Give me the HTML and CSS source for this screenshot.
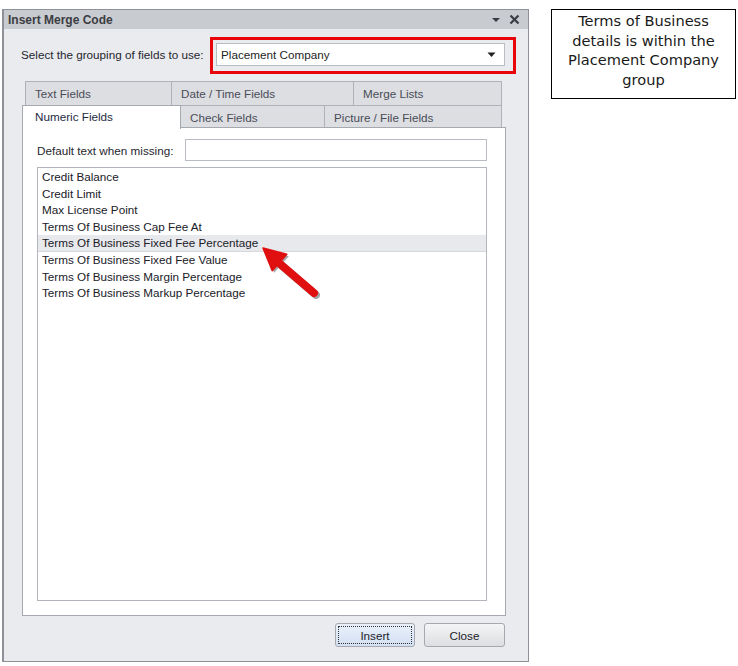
FILE: index.html
```html
<!DOCTYPE html>
<html>
<head>
<meta charset="utf-8">
<link rel="stylesheet" href="styles.css">
</head>
<body>
<div class="page">
  <div class="dialog">
    <div class="titlebar">
      <span class="title">Insert Merge Code</span>
      <span class="tb-icons">
        <svg width="10" height="10" viewBox="0 0 10 10"><path d="M1 3 L9 3 L5 7 Z" fill="#3a3d44"/></svg>
        <svg width="11" height="11" viewBox="0 0 11 11"><path d="M1.5 1.5 L9.5 9.5 M9.5 1.5 L1.5 9.5" stroke="#3a3d44" stroke-width="2.2"/></svg>
      </span>
    </div>
    <div class="body">
      <div class="group-row">
        <span class="group-label">Select the grouping of fields to use:</span>
        <div class="combo">
          <span>Placement Company</span>
          <svg width="9" height="6" viewBox="0 0 9 6"><path d="M0.5 0.5 L8.5 0.5 L4.5 5 Z" fill="#222"/></svg>
        </div>
      </div>
      <div class="tabs">
        <div class="tab-row row1">
          <div class="tab t-text">Text Fields</div>
          <div class="tab t-date">Date / Time Fields</div>
          <div class="tab t-merge">Merge Lists</div>
        </div>
        <div class="tab-row row2">
          <div class="tab t-num active">Numeric Fields</div>
          <div class="tab t-check">Check Fields</div>
          <div class="tab t-pic">Picture / File Fields</div>
        </div>
      </div>
      <div class="panel">
        <div class="default-row">
          <span class="default-label">Default text when missing:</span>
          <div class="text-input"></div>
        </div>
        <div class="listbox">
          <div class="item">Credit Balance</div>
          <div class="item">Credit Limit</div>
          <div class="item">Max License Point</div>
          <div class="item">Terms Of Business Cap Fee At</div>
          <div class="item hl">Terms Of Business Fixed Fee Percentage</div>
          <div class="item">Terms Of Business Fixed Fee Value</div>
          <div class="item">Terms Of Business Margin Percentage</div>
          <div class="item">Terms Of Business Markup Percentage</div>
        </div>
      </div>
      <div class="buttons">
        <div class="btn primary"><span class="focus">Insert</span></div>
        <div class="btn">Close</div>
      </div>
    </div>
    <svg class="arrow" width="80" height="70" viewBox="255 240 80 70">
      <g transform="translate(2,2)" opacity="0.35">
        <line x1="277" y1="263" x2="312" y2="293" stroke="#000" stroke-width="8" stroke-linecap="round"/>
        <polygon points="261,248 270.2,270.8 284.8,254.2" fill="#000"/>
      </g>
      <line x1="277" y1="263" x2="312" y2="293" stroke="#e01010" stroke-width="8" stroke-linecap="round"/>
      <polygon points="261,248 270.2,270.8 284.8,254.2" fill="#e01010" stroke="#e01010" stroke-width="1.5" stroke-linejoin="round"/>
    </svg>
  </div>
  <div class="note">Terms of Business details is within the Placement Company group</div>
</div>
</body>
</html>
```

FILE: styles.css
```css
html, body {
  margin: 0;
  padding: 0;
  background: #ffffff;
}
.page {
  display: flex;
  align-items: flex-start;
  padding: 9px 0 0 2px;
}
.dialog {
  position: relative;
  width: 524px;
  height: 651px;
  border: 1px solid #8e9298;
  border-left-width: 2px;
  background: #e9ebee;
  font-family: "Liberation Sans", Arial, sans-serif;
  font-size: 11.7px;
  color: #1e1e24;
  display: flex;
  flex-direction: column;
}
.titlebar {
  height: 19px;
  background: #c8cbd0;
  display: flex;
  align-items: center;
  justify-content: space-between;
  padding: 0 8px 0 4px;
}
.title {
  font-weight: bold;
  color: #3b3d42;
  font-size: 12px;
}
.tb-icons {
  display: flex;
  align-items: center;
  gap: 8px;
}
.body {
  flex: 1;
  display: flex;
  flex-direction: column;
  padding: 14px 21px 0 18px;
}
.group-row {
  display: flex;
  align-items: center;
  height: 23px;
}
.group-label {
  width: 194px;
  margin-left: -1px;
  padding-right: 1px;
  color: #26262e;
}
.combo {
  position: relative;
  background: #ffffff;
  border: 1px solid #b9bcc2;
  display: flex;
  align-items: center;
  justify-content: space-between;
  padding: 0 8px 0 4px;
  box-sizing: border-box;
  width: 289px;
  height: 23px;
}
.combo::after {
  content: "";
  position: absolute;
  left: -7px;
  top: -7px;
  right: -12px;
  bottom: -9px;
  border: 3px solid #e8060a;
}
.tabs {
  margin-top: 15px;
}
.tab-row {
  display: flex;
  height: 24px;
}
.row1 {
  padding-left: 3px;
}
.row2 {
  height: 23px;
}
.tab {
  box-sizing: border-box;
  height: 100%;
  background: #dcdee2;
  border: 1px solid #aeb1b7;
  border-bottom: none;
  color: #4a4c58;
  padding: 5px 0 0 9px;
  margin-right: -1px;
}
.t-text { width: 147px; }
.t-date { width: 183px; }
.t-merge { width: 149px; }
.t-num { width: 159px; }
.t-check { width: 145px; }
.t-pic { width: 178px; }
.tab.active {
  background: #ffffff;
  color: #1e2a44;
  padding-left: 12px;
  padding-top: 4px;
  height: 24px;
  position: relative;
  z-index: 2;
  border-color: #a6a9af;
}
.panel {
  box-sizing: border-box;
  width: 484px;
  height: 489px;
  margin-top: -1px;
  background: #ffffff;
  border: 1px solid #a6a9af;
  padding: 11px 18px 14px 14px;
  display: flex;
  flex-direction: column;
}
.default-row {
  display: flex;
  align-items: center;
  height: 22px;
}
.default-label {
  width: 148px;
  color: #26262e;
}
.text-input {
  box-sizing: border-box;
  width: 302px;
  height: 22px;
  border: 1px solid #b9bcc2;
}
.listbox {
  box-sizing: border-box;
  margin-top: 6px;
  flex: 1;
  border: 1px solid #b2b5bb;
  padding-top: 1px;
}
.item {
  height: 16.6px;
  line-height: 16.6px;
  padding-left: 4px;
  color: #202028;
}
.item.hl {
  background: #e8e9ec;
  box-shadow: inset 0 -1px 0 #d6d8dc;
}
.buttons {
  display: flex;
  justify-content: flex-end;
  gap: 9px;
  margin-top: 7px;
  padding-right: 2px;
}
.btn {
  box-sizing: border-box;
  width: 81px;
  height: 24px;
  border: 1px solid #a5a8ae;
  border-radius: 3px;
  background: linear-gradient(#f4f5f6, #dcdee1);
  display: flex;
  align-items: center;
  justify-content: center;
  color: #22222a;
}
.btn.primary {
  width: 80px;
  background: linear-gradient(#e9f0fa, #d3e0f3);
  padding: 2px;
}
.focus {
  box-sizing: border-box;
  width: 100%;
  height: 100%;
  border: 1px dotted #333;
  display: flex;
  align-items: center;
  justify-content: center;
}
.arrow {
  position: absolute;
  left: 253px;
  top: 230px;
}
.note {
  box-sizing: border-box;
  margin-left: 22px;
  width: 185px;
  height: 90px;
  border: 1px solid #000;
  font-family: "DejaVu Sans", sans-serif;
  font-size: 14.6px;
  line-height: 19.7px;
  text-align: center;
  padding: 1px 4px 0;
  color: #1a1a1a;
}
```
